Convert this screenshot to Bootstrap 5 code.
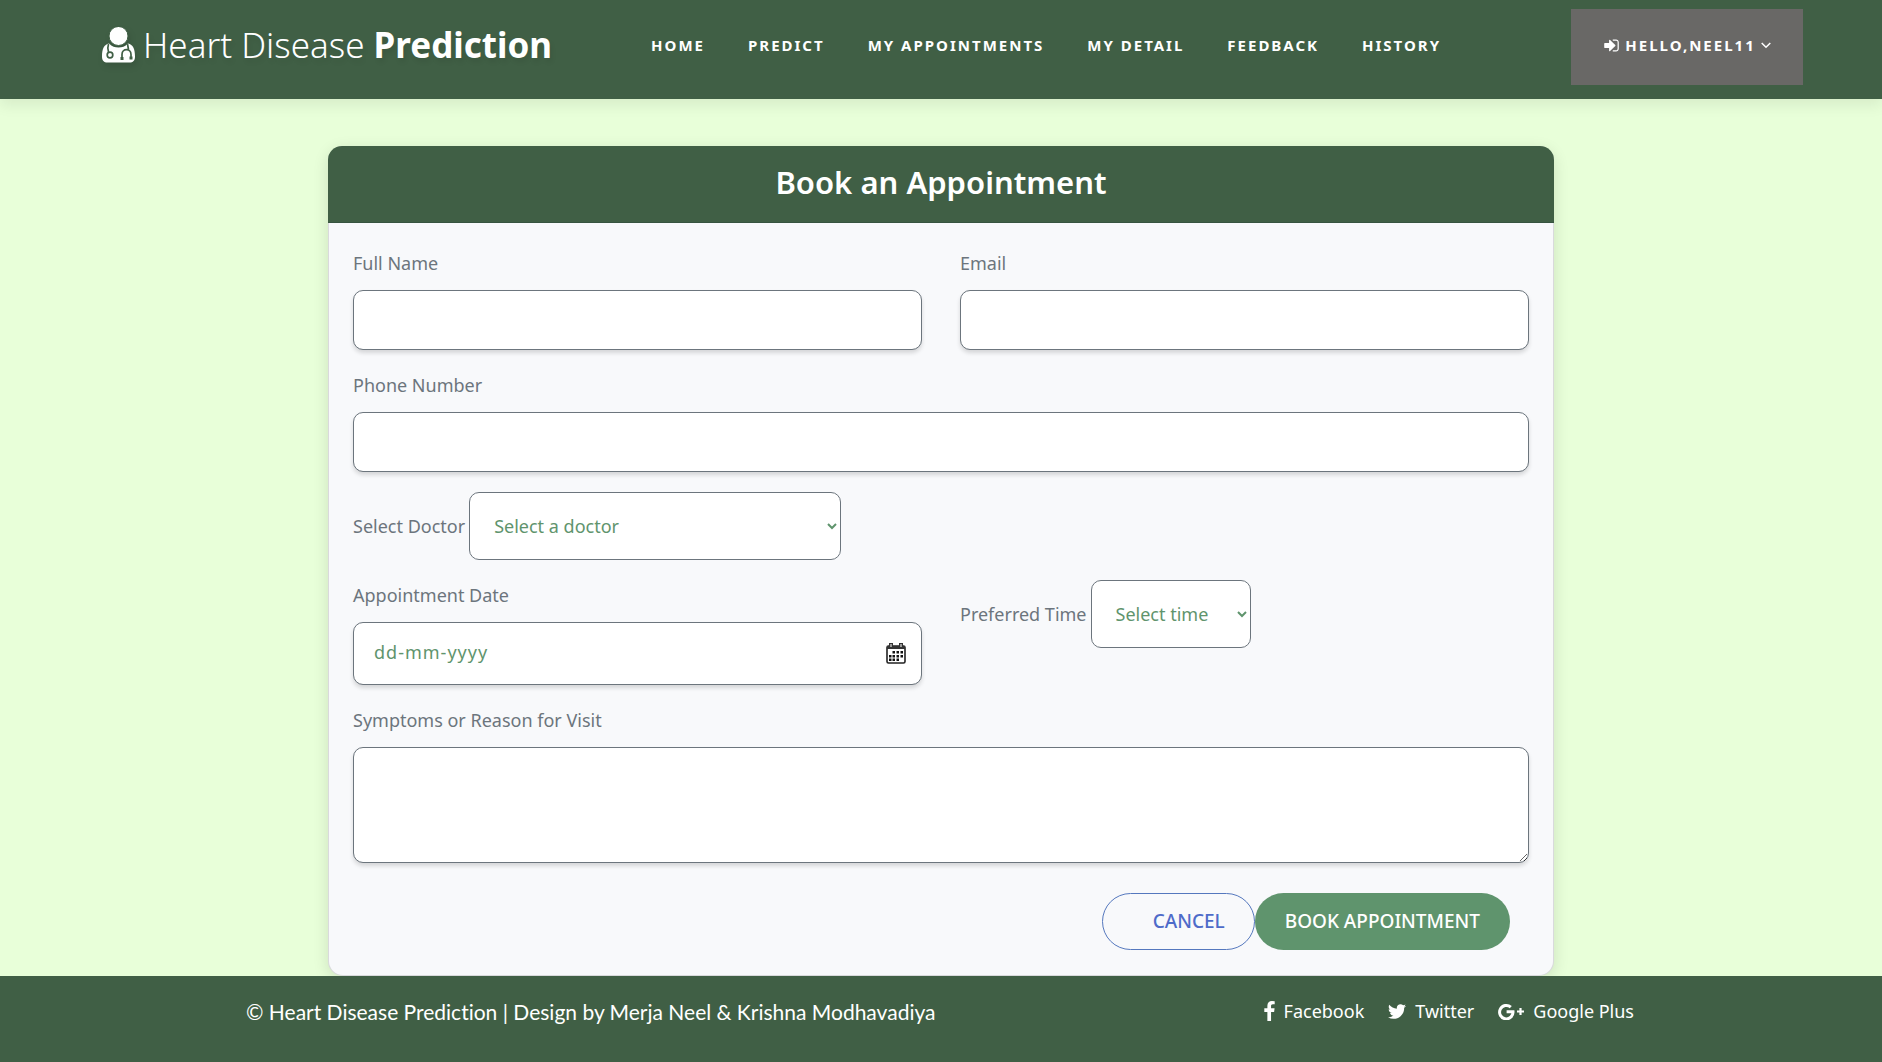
<!DOCTYPE html>
<html lang="en">
<head>
<meta charset="utf-8">
<meta name="viewport" content="width=device-width, initial-scale=1">
<title>Heart Disease Prediction</title>
<link href="https://cdn.jsdelivr.net/npm/bootstrap@5.3.0/dist/css/bootstrap.min.css" rel="stylesheet">
<style>
  :root { --pine: #405f45; --leaf: #5f946d; --ink: #6c757d; }
  body { font-family: "Noto Sans", "Open Sans", sans-serif; font-size: 18px; line-height: 30px; background: #e8ffd9; }
  .site-header { background: var(--pine); padding: 9px 79px 14px 102px; box-shadow: 0 6px 14px rgba(0,0,0,.08); }
  .brand { font-size: 35px; font-weight: 275; line-height: 44px; gap: 8px; text-shadow: 2px 4px 5px rgba(0,0,0,.08); margin-bottom: 4px; }
  .brand svg { filter: drop-shadow(2px 4px 3px rgba(0,0,0,.1)); }
  .brand strong { font-weight: 700; }
  .main-nav { margin-left: 99px; }
  .main-menu { gap: 43px; }
  .main-menu a, .user-menu { font-size: 15px; font-weight: 700; letter-spacing: 2px; line-height: 24px; text-transform: uppercase; color: #fff; text-decoration: none; white-space: nowrap; }
  .main-menu a { display: block; margin-bottom: 4px; }
  .user-menu { background: #696866; border: 0; height: 76px; width: 232px; padding: 0 0 4px; gap: 5px; }
  .booking { max-width: 1226px; margin-top: 47px; background: #f8f9fb; border: 1px solid rgba(0,0,0,.12); border-top: 0; border-radius: 15px; box-shadow: 0 4px 16px rgba(0,0,0,.12); }
  .booking-head { background: var(--pine); color: #fff; border-radius: 14px 14px 0 0; padding: 14px 16px 18px; font-size: 31px; font-weight: 600; line-height: 44px; border-bottom: 1px solid #375440; margin: 0 -1px; }
  .booking-body { padding: 25px 24px; }
  .booking-body .row { --bs-gutter-x: 38px; }
  .booking label { color: var(--ink); }
  .stack-label { display: block; margin-bottom: 12px; }
  .field { margin-bottom: 20px; }
  .box-input { height: 60px; border: 1px solid #6c757d; border-radius: 10px; box-shadow: 0 3px 4px rgba(0,0,0,.14); padding: 0 20px; background-color: #fff; color: var(--leaf); }
  .date-input { height: 63px; padding-bottom: 4px; font-size: 18px; letter-spacing: 1px; }
  .date-input::placeholder { color: var(--leaf); opacity: 1; }
  .date-button { position: absolute; right: 16px; top: 21px; padding: 0; border: 0; background: none; line-height: 0; }
  .area-input { height: 116px; }
  .pick { height: 68px; border: 1px solid #6c757d; border-radius: 10px; padding: 0 0 0 20px; background: #fff; color: var(--leaf); font-size: 18px; }
  .pick-doctor { width: 372px; }
  .pick-time { width: 160px; }
  .actions { padding-right: 19px; margin-top: 30px; }
  .pill { height: 57px; border-radius: 29px; font-size: 19px; font-weight: 500; padding: 0 29px; text-transform: uppercase; }
  .pill-line { border: 1px solid #5578be; color: #4e6bc9; padding-left: 50px; }
  .pill-full { background: var(--leaf); color: #fff; }
  .site-footer { background: var(--pine); color: #fff; padding: 21px 248px 0 246px; }
  .site-footer p { font-family: Lato, sans-serif; font-size: 21px; font-variant-ligatures: none; }
  .site-footer ul { gap: 24px; line-height: 28px; }
  .site-footer a { color: #fff; text-decoration: none; gap: 9px; }
</style>
</head>
<body class="d-flex flex-column min-vh-100">
<header class="site-header d-flex align-items-center">
  <a class="brand d-flex align-items-center text-white text-decoration-none" href="#">
    <svg width="33" height="36" viewBox="0 0 33 36" aria-hidden="true">
      <path fill="#fff" d="M7 16.500C10 19.500 13 20.500 16.500 20.500S23 19.500 26 16.500C31 17.500 33 22 33 29.500C33 33.500 31 35.500 27.500 35.500H5.500C2 35.500 0 33.500 0 29.500C0 22 2 17.500 7 16.500Z"/>
      <circle cx="16.500" cy="9" r="9.500" fill="#fff" stroke="#405f45"/>
      <g fill="none" stroke="#405f45" stroke-width="1.700">
        <path d="M6.500 17C5.500 20 5.500 22 6.500 25M25.500 17L26.500 22.500M20 32V27.500C20 21 29 21 29 27.500V31"/>
        <circle cx="8" cy="28" r="2.800"/>
      </g>
      <path fill="#405f45" d="M18.500 30h3v3h-3zM27.500 29.500h3v3h-3z"/>
    </svg>
    <span>Heart Disease <strong>Prediction</strong></span>
  </a>
  <nav class="main-nav" aria-label="Main">
    <ul class="main-menu list-unstyled d-flex mb-0">
      <li><a href="#">Home</a></li>
      <li><a href="#">Predict</a></li>
      <li><a href="#">My Appointments</a></li>
      <li><a href="#">My Detail</a></li>
      <li><a href="#">Feedback</a></li>
      <li><a href="#">History</a></li>
    </ul>
  </nav>
  <button class="user-menu ms-auto d-flex align-items-center justify-content-center" type="button">
    <svg width="17" height="17" viewBox="0 0 1792 1792" fill="#fff" aria-hidden="true"><path d="M1312 896q0 26-19 45l-544 544q-19 19-45 19t-45-19-19-45v-288h-448q-26 0-45-19t-19-45v-384q0-26 19-45t45-19h448v-288q0-26 19-45t45-19 45 19l544 544q19 19 19 45zm352-352v704q0 119-84.500 203.500t-203.500 84.500h-320q-13 0-22.500-9.500t-9.500-22.500q0-4-1-20t-.5-26.500 3-23.500 10-19.500 20.500-6.500h320q66 0 113-47t47-113v-704q0-66-47-113t-113-47h-312l-11.500-1-11.500-3-8-5.500-7-9-2-13.500q0-4-1-20t-.5-26.500 3-23.500 10-19.500 20.500-6.500h320q119 0 203.500 84.500t84.500 203.500z"/></svg>
    <span>Hello,neel11</span>
    <svg width="10" height="7" viewBox="0 0 10 7" fill="none" stroke="#fff" stroke-width="1.500" aria-hidden="true"><path d="M.7 1L5 5.300L9.300 1"/></svg>
  </button>
</header>

<main class="px-3">
  <section class="booking mx-auto">
    <h1 class="booking-head text-center">Book an Appointment</h1>
    <form class="booking-body">
      <div class="row">
        <div class="col-md-6 field">
          <label class="stack-label" for="name">Full Name</label>
          <input class="form-control box-input" type="text" id="name">
        </div>
        <div class="col-md-6 field">
          <label class="stack-label" for="email">Email</label>
          <input class="form-control box-input" type="email" id="email">
        </div>
      </div>
      <div class="field">
        <label class="stack-label" for="phone">Phone Number</label>
        <input class="form-control box-input" type="tel" id="phone">
      </div>
      <div class="field d-flex align-items-center gap-1">
        <label for="doctor">Select Doctor</label>
        <select class="pick pick-doctor" id="doctor"><option>Select a doctor</option></select>
      </div>
      <div class="row">
        <div class="col-md-6 field">
          <label class="stack-label" for="date">Appointment Date</label>
          <div class="position-relative">
            <input class="form-control box-input date-input" type="text" id="date" placeholder="dd-mm-yyyy">
            <button class="date-button" type="button" aria-label="Choose date">
              <svg width="20" height="21" viewBox="0 0 20 21" aria-hidden="true">
                <rect x="1" y="3" width="18" height="17" rx="1.500" fill="none" stroke="#222" stroke-width="1.600"/>
                <path fill="#333" d="M1 3h18v3H1zM3 0h4v4H3zM13 0h4v4h-4z"/>
                <path fill="#fff" d="M4.500 1h1v3h-1zM14.500 1h1v3h-1z"/>
                <path fill="#111" d="M6.500 8h2.500v2.500H6.500zM10.500 8h2.500v2.500h-2.500zM14.500 8h2.500v2.500h-2.500zM3 12h2.500v2.500H3zM6.500 12h2.500v2.500H6.500zM10.500 12h2.500v2.500h-2.500zM14.500 12h2.500v2.500h-2.500zM3 15.500h2.500v2.500H3zM6.500 15.500h2.500v2.500H6.500zM10.500 15.500h2.500v2.500h-2.500z"/>
              </svg>
            </button>
          </div>
        </div>
        <div class="col-md-6 field">
          <div class="d-flex align-items-center gap-1">
            <label for="time">Preferred Time</label>
            <select class="pick pick-time" id="time"><option>Select time</option></select>
          </div>
        </div>
      </div>
      <div>
        <label class="stack-label" for="reason">Symptoms or Reason for Visit</label>
        <textarea class="form-control box-input area-input" id="reason"></textarea>
      </div>
      <div class="actions d-flex justify-content-end">
        <button class="btn pill pill-line" type="button">Cancel</button>
        <button class="btn pill pill-full" type="submit">Book Appointment</button>
      </div>
    </form>
  </section>
</main>

<footer class="site-footer flex-grow-1 d-flex justify-content-between align-items-start">
  <p class="mb-0">© Heart Disease Prediction | Design by Merja Neel &amp; Krishna Modhavadiya</p>
  <ul class="list-unstyled d-flex mb-0">
    <li><a class="d-flex align-items-center" href="#"><svg width="11" height="20" viewBox="479 0 864 1664" fill="#fff" aria-hidden="true"><path d="M1343 12v264h-157q-86 0-116 36t-30 108v189h293l-39 296h-254v759h-306v-759h-255v-296h255v-218q0-186 104-288.500t277-102.500q147 0 228 12z"/></svg>Facebook</a></li>
    <li><a class="d-flex align-items-center" href="#"><svg width="18" height="15" viewBox="108 256 1576 1280" fill="#fff" aria-hidden="true"><path d="M1684 408q-67 98-162 167 1 14 1 42 0 130-38 259.500t-115.500 248.500-184.500 210.500-258 146-323 54.500q-271 0-496-145 35 4 78 4 225 0 401-138-105-2-188-64.500t-114-159.500q33 5 61 5 43 0 85-11-112-23-185.500-111.500t-73.500-205.500v-4q68 38 146 41-66-44-105-115t-39-154q0-88 44-163 121 149 294.500 238.500t371.500 99.500q-8-38-8-74 0-134 94.500-228.500t228.500-94.500q140 0 236 102 109-21 205-78-37 115-142 178 93-10 186-50z"/></svg>Twitter</a></li>
    <li><a class="d-flex align-items-center" href="#"><svg width="26" height="17" viewBox="0 0 26 17" aria-hidden="true"><path d="M12.800 4.200A6.700 6.700 0 1 0 15 8.700H8.600" fill="none" stroke="#fff" stroke-width="3"/><path d="M22.500 5v7M19 8.500h7" stroke="#fff" stroke-width="2.200"/></svg>Google Plus</a></li>
  </ul>
</footer>
<script src="https://cdn.jsdelivr.net/npm/bootstrap@5.3.0/dist/js/bootstrap.bundle.min.js"></script>
</body>
</html>
